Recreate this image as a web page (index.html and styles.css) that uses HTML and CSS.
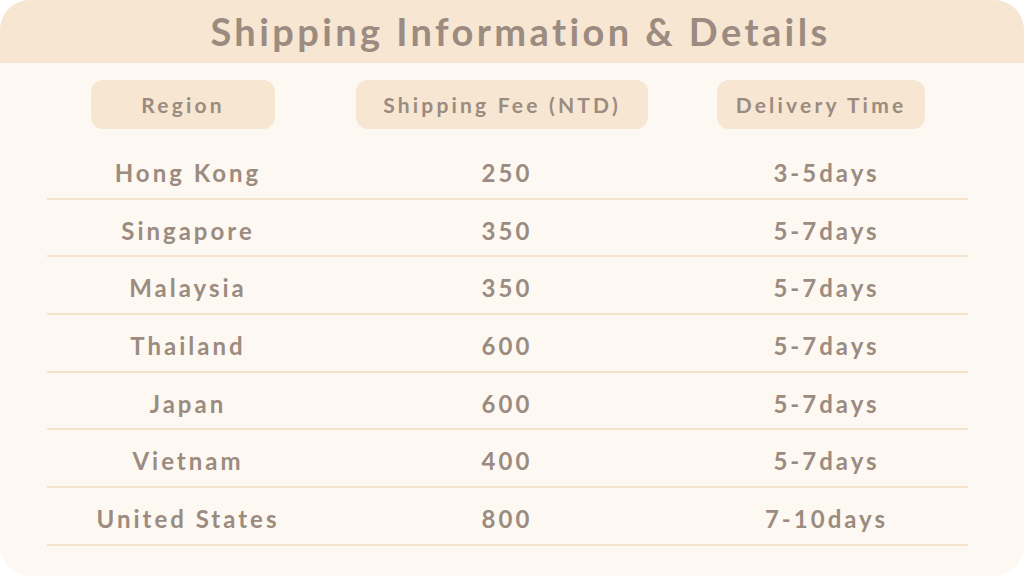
FILE: index.html
```html
<!DOCTYPE html>
<html>
<head>
<meta charset="utf-8">
<link rel="stylesheet" href="styles.css">
</head>
<body>
<div class="card">
  <header class="card-head">
    <h1 class="title">Shipping Information &amp; Details</h1>
  </header>
  <div class="table">
    <div class="heads">
      <div class="pill pill-region">Region</div>
      <div class="pill pill-fee">Shipping Fee (NTD)</div>
      <div class="pill pill-time">Delivery Time</div>
    </div>
    <div class="row"><span>Hong Kong</span><span>250</span><span>3-5days</span></div>
    <div class="row"><span>Singapore</span><span>350</span><span>5-7days</span></div>
    <div class="row"><span>Malaysia</span><span>350</span><span>5-7days</span></div>
    <div class="row"><span>Thailand</span><span>600</span><span>5-7days</span></div>
    <div class="row"><span>Japan</span><span>600</span><span>5-7days</span></div>
    <div class="row"><span>Vietnam</span><span>400</span><span>5-7days</span></div>
    <div class="row"><span>United States</span><span>800</span><span>7-10days</span></div>
  </div>
</div>
</body>
</html>
```
FILE: styles.css
```css
html, body {
  margin: 0;
  padding: 0;
  background: #ffffff;
}
body {
  width: 1024px;
  height: 576px;
  overflow: hidden;
  font-family: Lato, "Open Sans", sans-serif;
  color: #9b8b80;
}
.card {
  width: 1024px;
  height: 576px;
  background: #fdf9f2;
  border-radius: 30px;
  overflow: hidden;
  display: flex;
  flex-direction: column;
}
.card-head {
  height: 63px;
  background: #f6e6d2;
  display: flex;
  align-items: center;
  justify-content: center;
}
.title {
  margin: 0;
  font-size: 38px;
  font-weight: 700;
  letter-spacing: 3.4px;
  line-height: 1;
  padding-bottom: 2px;
  padding-left: 17px;
}
.table {
  margin: 0 56px 0 47px;
  display: flex;
  flex-direction: column;
}
.heads {
  display: grid;
  grid-template-columns: 282px 352px 287px;
  padding-top: 17px;
  height: 49px;
  margin-bottom: 13px;
}
.pill {
  background: #f6e6d2;
  border-radius: 12px;
  height: 49px;
  display: flex;
  align-items: center;
  justify-content: center;
  font-size: 21px;
  font-weight: 700;
  letter-spacing: 3.2px;
}
.pill-region { width: 184px; justify-self: start; margin-left: 44px; }
.pill-fee { width: 292px; justify-self: start; margin-left: 27px; }
.pill-time { width: 208px; justify-self: start; margin-left: 36px; }
.row {
  display: grid;
  grid-template-columns: 282px 352px 289px;
  height: 55.7px;
  box-sizing: content-box;
  border-bottom: 2px solid #f5e3cc;
  align-items: center;
  font-size: 24px;
  font-weight: 700;
  letter-spacing: 3px;
}
.row span {
  text-align: center;
  padding-top: 5px;
}
.row span:nth-child(2) { padding-left: 4px; }
.row span:nth-child(3) { padding-left: 2px; }
```
